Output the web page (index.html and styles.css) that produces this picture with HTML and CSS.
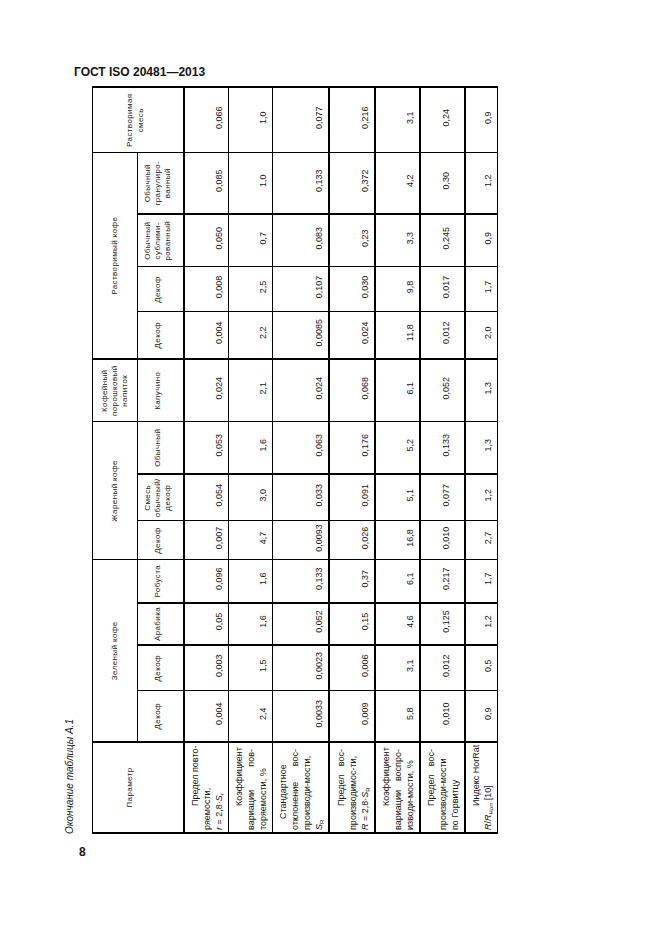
FILE: index.html
```html
<!DOCTYPE html>
<html lang="ru">
<head>
<meta charset="utf-8">
<title>ГОСТ ISO 20481—2013</title>
<link rel="stylesheet" href="styles.css">
</head>
<body>
<div class="page">
  <div class="doc-title">ГОСТ ISO 20481—2013</div>
  <div class="sheet">
    <div class="sheet-rot">
      <div class="caption">Окончание таблицы А.1</div>
      <table class="tbl">
        <colgroup>
          <col class="c-param">
          <col class="c2">
          <col class="c3">
          <col class="c4">
          <col class="c5">
          <col class="c6">
          <col class="c7">
          <col class="c8">
          <col class="c9">
          <col class="c10">
          <col class="c11">
          <col class="c12">
          <col class="c13">
          <col class="c14">
        </colgroup>
        <thead>
          <tr class="r-grp">
            <th rowspan="2" class="hd-span hd-param">Параметр</th>
            <th colspan="4">Зеленый кофе</th>
            <th colspan="3">Жареный кофе</th>
            <th>Кофейный<br>порошковый<br>напиток</th>
            <th colspan="4">Растворимый кофе</th>
            <th rowspan="2" class="hd-span hd-mix">Растворимая<br>смесь</th>
          </tr>
          <tr class="r-sub">
            <th>Декоф</th>
            <th>Декоф</th>
            <th>Арабика</th>
            <th>Робуста</th>
            <th>Декоф</th>
            <th>Смесь<br>обычный/<br>декоф</th>
            <th>Обычный</th>
            <th>Капучино</th>
            <th>Декоф</th>
            <th>Декоф</th>
            <th>Обычный<br>сублими-<br>рованный</th>
            <th>Обычный<br>гранулиро-<br>ванный</th>
          </tr>
        </thead>
        <tbody>
          <tr class="r1">
            <td class="lbl">
              <div class="ln j ind">Предел повто-</div>
              <div class="ln">ряемости,</div>
              <div class="ln"><i>r</i> = 2,8·<i>S</i><sub>r</sub></div>
            </td>
            <td>0,004</td><td>0,003</td><td>0,05</td><td>0,096</td><td>0,007</td><td>0,054</td><td>0,053</td><td>0,024</td><td>0,004</td><td>0,008</td><td>0,050</td><td>0,085</td><td>0,066</td>
          </tr>
          <tr class="r2">
            <td class="lbl">
              <div class="ln ind">Коэффициент</div>
              <div class="ln j">вариации пов-</div>
              <div class="ln">торяемости, %</div>
            </td>
            <td>2,4</td><td>1,5</td><td>1,6</td><td>1,6</td><td>4,7</td><td>3,0</td><td>1,6</td><td>2,1</td><td>2,2</td><td>2,5</td><td>0,7</td><td>1,0</td><td>1,0</td>
          </tr>
          <tr class="r3 bb">
            <td class="lbl">
              <div class="ln ind-s">Стандартное</div>
              <div class="ln j">отклонение вос-</div>
              <div class="ln">производи-мости,</div>
              <div class="ln"><i>S</i><sub>R</sub></div>
            </td>
            <td>0,0033</td><td>0,0023</td><td>0,052</td><td>0,133</td><td>0,0093</td><td>0,033</td><td>0,063</td><td>0,024</td><td>0,0085</td><td>0,107</td><td>0,083</td><td>0,133</td><td>0,077</td>
          </tr>
          <tr class="r4 bb">
            <td class="lbl">
              <div class="ln j ind">Предел вос-</div>
              <div class="ln">производимос-ти,</div>
              <div class="ln"><i>R</i> = 2,8·<i>S</i><sub>R</sub></div>
            </td>
            <td>0,009</td><td>0,006</td><td>0,15</td><td>0,37</td><td>0,026</td><td>0,091</td><td>0,176</td><td>0,068</td><td>0,024</td><td>0,030</td><td>0,23</td><td>0,372</td><td>0,216</td>
          </tr>
          <tr class="r5 bb">
            <td class="lbl">
              <div class="ln ind">Коэффициент</div>
              <div class="ln j">вариации воспро-</div>
              <div class="ln">изводи-мости, %</div>
            </td>
            <td>5,8</td><td>3,1</td><td>4,6</td><td>6,1</td><td>16,8</td><td>5,1</td><td>5,2</td><td>6,1</td><td>11,8</td><td>9,8</td><td>3,3</td><td>4,2</td><td>3,1</td>
          </tr>
          <tr class="r6 bb">
            <td class="lbl">
              <div class="ln j ind">Предел вос-</div>
              <div class="ln">производи-мости</div>
              <div class="ln">по Горвитцу</div>
            </td>
            <td>0,010</td><td>0,012</td><td>0,125</td><td>0,217</td><td>0,010</td><td>0,077</td><td>0,133</td><td>0,052</td><td>0,012</td><td>0,017</td><td>0,245</td><td>0,30</td><td>0,24</td>
          </tr>
          <tr class="r7">
            <td class="lbl">
              <div class="ln j ind">Индекс HorRat</div>
              <div class="ln"><i>R</i>/<i>R</i><sub>Horr</sub> [10]</div>
            </td>
            <td>0,9</td><td>0,5</td><td>1,2</td><td>1,7</td><td>2,7</td><td>1,2</td><td>1,3</td><td>1,3</td><td>2,0</td><td>1,7</td><td>0,9</td><td>1,2</td><td>0,9</td>
          </tr>
        </tbody>
      </table>
    </div>
  </div>
  <div class="page-num">8</div>
</div>
</body>
</html>
```

FILE: styles.css
```css
html, body {
  margin: 0;
  background: #fff;
}

body {
  font-family: "Liberation Sans", Arial, sans-serif;
  color: #151515;
}

.page {
  width: 661px;
  height: 936px;
  padding-top: 65px;
  box-sizing: border-box;
}

.doc-title {
  margin-left: 74px;
  font-size: 12px;
  line-height: 14px;
  font-weight: bold;
}

.sheet {
  margin-left: 62px;
  margin-top: 9px;
  width: 440px;
  height: 746px;
}

.sheet-rot {
  width: 746px;
  transform-origin: 0 0;
  transform: rotate(-90deg) translateX(-100%);
}

.caption {
  font-size: 10px;
  line-height: 16px;
  font-style: italic;
  margin-bottom: 14px;
  white-space: nowrap;
}

.page-num {
  margin-left: 79px;
  margin-top: 11px;
  font-size: 12px;
  line-height: 14px;
  font-weight: bold;
}

/* table */
.tbl {
  width: 746px;
  table-layout: fixed;
  border-collapse: collapse;
}

.tbl th,
.tbl td {
  border: 1px solid #000;
  padding: 0;
  white-space: nowrap;
}

.c-param { width: 91px; border-left: 2px solid #000; border-right: 2px solid #000; }
.c2 { width: 51px; }
.c3 { width: 46px; border-right: 2px solid #000; }
.c4 { width: 42px; border-right: 2px solid #000; }
.c5 { width: 43px; }
.c6 { width: 39px; }
.c7 { width: 47px; border-right: 2px solid #000; }
.c8 { width: 52px; }
.c9 { width: 63px; border-right: 2px solid #000; }
.c10 { width: 47px; }
.c11 { width: 45px; }
.c12 { width: 53px; border-right: 2px solid #000; }
.c13 { width: 61px; }
.c14 { width: 66px; border-right: 2px solid #000; }

.tbl th {
  font-weight: normal;
  font-size: 8px;
  letter-spacing: 0.4px;
  line-height: 10px;
  text-align: center;
  vertical-align: middle;
  color: #222;
}

.r-grp { height: 45px; }
.r-sub { height: 46px; }

.r-sub th {
  padding-bottom: 4px;
  border-bottom: 2px solid #000;
}

.tbl th.hd-span {
  border-bottom: 2px solid #000;
}

.tbl th.hd-param { padding-bottom: 16px; }
.tbl th.hd-mix { padding-bottom: 6px; line-height: 11px; }

.r1 { height: 45px; }
.r2 { height: 44px; }
.r3 { height: 56px; }
.r4 { height: 46px; }
.r5 { height: 45px; }
.r6 { height: 45px; }
.r7 { height: 33px; }

.tbl tr.bb td { border-bottom: 2px solid #000; }

.tbl td {
  font-size: 9px;
  line-height: 12px;
  text-align: center;
  vertical-align: bottom;
  padding: 0 0 3px 5px;
}

.tbl tr.r6 td { padding-bottom: 12px; }

.tbl td.lbl {
  text-align: left;
  padding: 0 6px 3px 2px;
}

.tbl tr.r6 td.lbl { padding-bottom: 3px; }

.ln {
  white-space: nowrap;
}

.ln.j {
  text-align: justify;
  text-align-last: justify;
}

.ln.ind { padding-left: 24px; }
.ln.ind-s { padding-left: 11px; }

.lbl sub {
  font-size: 6px;
  line-height: 0;
  vertical-align: -2px;
}
```
